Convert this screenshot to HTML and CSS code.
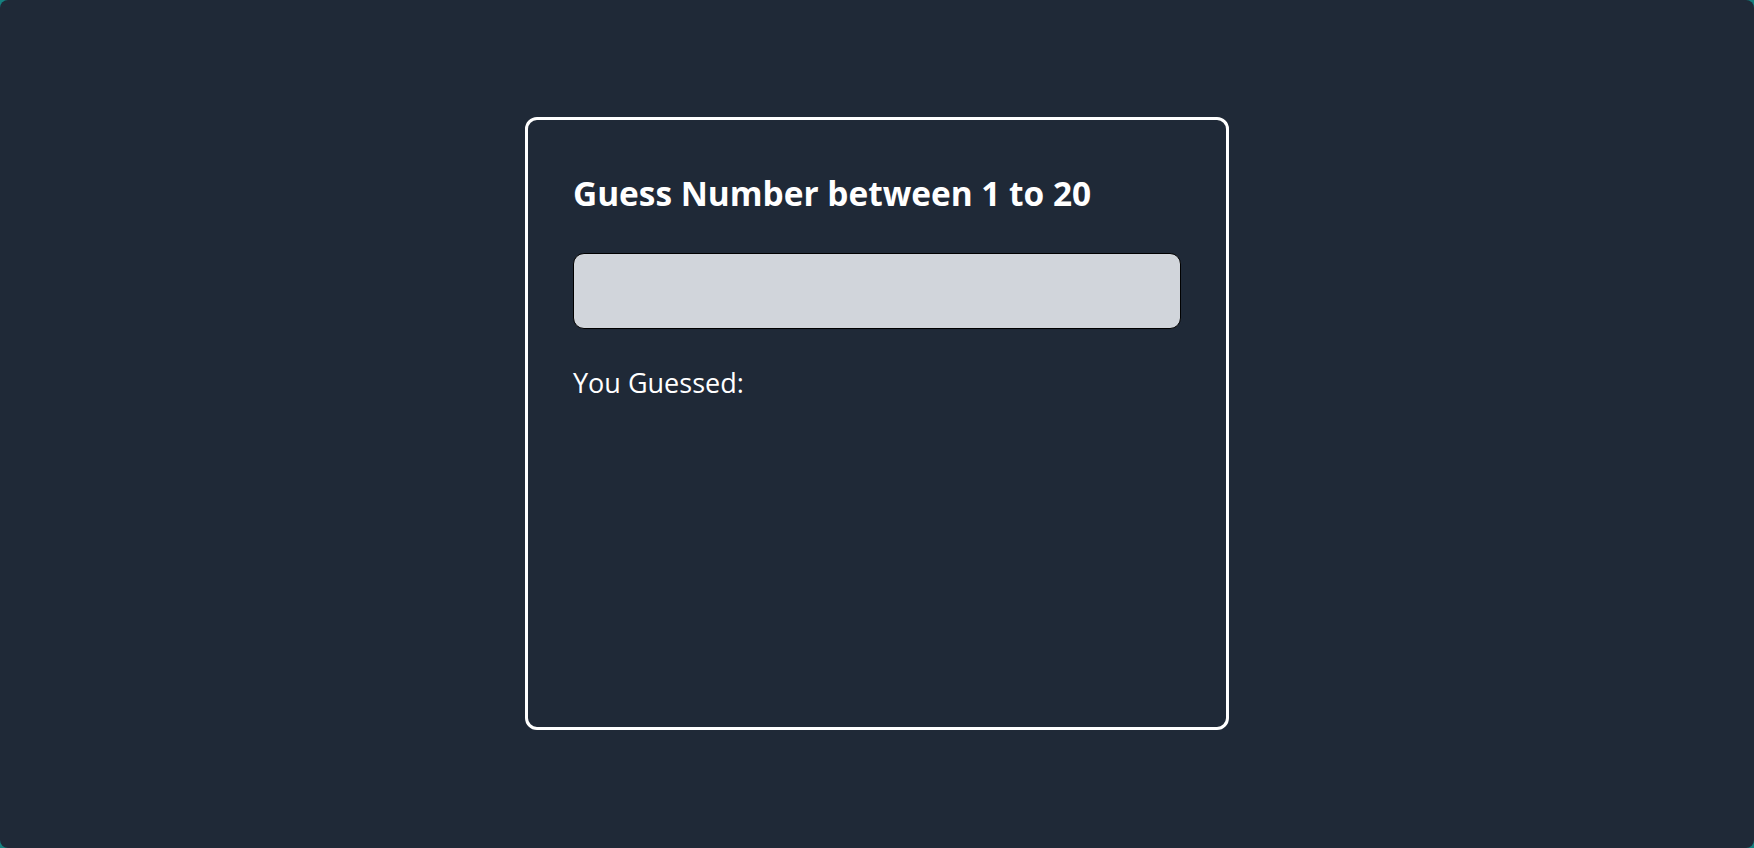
FILE: index.html
```html
<!DOCTYPE html>
<html lang="en">
<head>
<meta charset="utf-8">
<title>Guess Number</title>
<link rel="stylesheet" href="styles.css">
</head>
<body>
<div class="screen">
  <main class="card">
    <h1 class="title">Guess Number between 1 to 20</h1>
    <input class="guess-input" type="text" aria-label="Your guess">
    <p class="result">You Guessed:</p>
  </main>
</div>
</body>
</html>
```

FILE: styles.css
```css
* { box-sizing: border-box; }
html, body { margin: 0; padding: 0; }
body {
  background: #15807f;
  font-family: "Open Sans", "Noto Sans", sans-serif;
}
.screen {
  width: 1754px;
  height: 848px;
  background: #1f2937;
  border-radius: 8px;
  display: flex;
  justify-content: center;
  align-items: flex-start;
  padding-top: 117px;
}
.card {
  width: 704px;
  height: 613px;
  border: 3px solid #ffffff;
  border-radius: 12px;
  padding: 45px;
  display: flex;
  flex-direction: column;
  color: #ffffff;
}
.title {
  margin: 0;
  font-size: 33.4px;
  font-weight: 700;
  line-height: 40px;
  padding-top: 8px;
}
.guess-input {
  margin-top: 40px;
  width: 100%;
  height: 76px;
  background: #d1d5db;
  border: 1.5px solid #000000;
  border-radius: 11px;
  outline: none;
}
.result {
  margin: 0;
  margin-top: 36px;
  font-size: 27px;
  line-height: 36px;
  font-weight: 400;
}
```
